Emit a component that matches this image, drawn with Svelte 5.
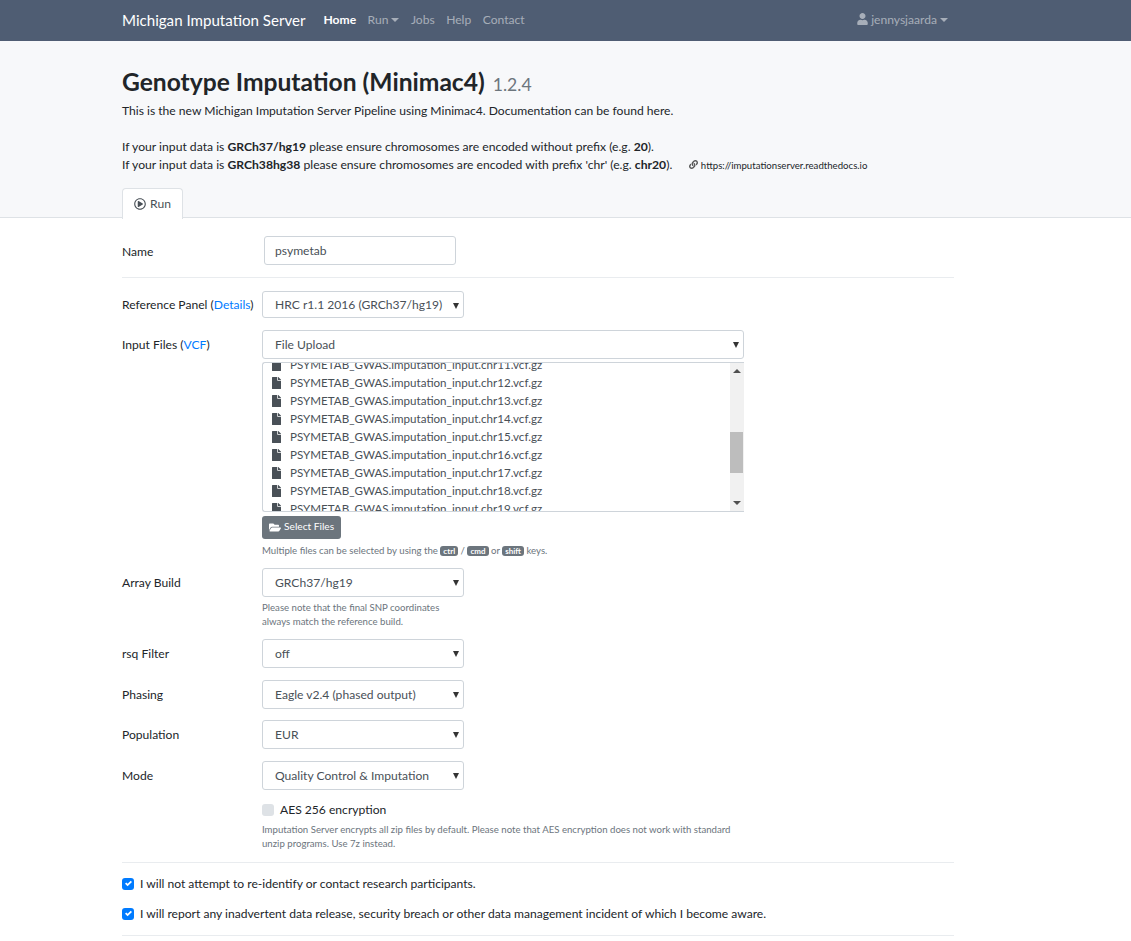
<script lang="ts">
	const files = [11, 12, 13, 14, 15, 16, 17, 18, 19];
	const selects = [
		{ label: 'rsq Filter', value: 'off' },
		{ label: 'Phasing', value: 'Eagle v2.4 (phased output)' },
		{ label: 'Population', value: 'EUR' },
		{ label: 'Mode', value: 'Quality Control & Imputation' }
	];
</script>

{#snippet caret()}
	<span class="caret" aria-hidden="true"></span>
{/snippet}

<div class="page">
	<nav class="navbar">
		<div class="nav-inner">
			<span class="brand">Michigan Imputation Server</span>
			<span class="nav-link active">Home</span>
			<span class="nav-link">Run<i class="nav-caret"></i></span>
			<span class="nav-link">Jobs</span>
			<span class="nav-link">Help</span>
			<span class="nav-link">Contact</span>
			<span class="nav-link user">
				<svg class="user-icon" viewBox="0 0 448 512" aria-hidden="true"><path fill="currentColor" d="M224 256c70.7 0 128-57.3 128-128S294.700 0 224 0 96 57.300 96 128s57.300 128 128 128zm89.600 32h-16.700c-22.200 10.200-46.900 16-72.900 16s-50.600-5.800-72.900-16h-16.700C60.200 288 0 348.200 0 422.400V464c0 26.500 21.500 48 48 48h352c26.500 0 48-21.500 48-48v-41.600c0-74.200-60.200-134.400-134.400-134.400z"/></svg>
				jennysjaarda<i class="nav-caret"></i>
			</span>
		</div>
	</nav>

	<header class="hero">
		<div class="container">
			<h1>Genotype Imputation (Minimac4) <small>1.2.4</small></h1>
			<p class="intro">This is the new Michigan Imputation Server Pipeline using Minimac4. Documentation can be found here.</p>
			<p class="intro note first-note">If your input data is <b>GRCh37/hg19</b> please ensure chromosomes are encoded without prefix (e.g. <b>20</b>).</p>
			<p class="intro note">
				If your input data is <b>GRCh38hg38</b> please ensure chromosomes are encoded with prefix 'chr' (e.g. <b>chr20</b>).
				<span class="doc-link">
					<svg class="link-icon" viewBox="0 0 512 512" aria-hidden="true"><path fill="currentColor" d="M326.612 185.391c59.747 59.809 58.927 155.698.36 214.590-.11.120-.24.250-.36.370l-67.200 67.200c-59.270 59.270-155.699 59.262-214.960 0-59.270-59.260-59.270-155.700 0-214.960l37.106-37.106c9.840-9.840 26.786-3.300 27.294 10.606.648 17.722 3.826 35.527 9.690 52.721 1.986 5.822.567 12.262-3.783 16.612l-13.087 13.087c-28.026 28.026-28.905 73.660-1.155 101.960 28.024 28.579 74.086 28.749 102.325.51l67.200-67.190c28.191-28.191 28.073-73.757 0-101.830-3.701-3.694-7.429-6.564-10.341-8.569a16.037 16.037 0 0 1-6.947-12.606c-.396-10.567 3.348-21.456 11.698-29.806l21.054-21.055c5.521-5.521 14.182-6.199 20.584-1.731a152.482 152.482 0 0 1 20.522 17.197zM467.547 44.449c-59.261-59.262-155.690-59.270-214.960 0l-67.200 67.200c-.12.120-.25.250-.36.370-58.566 58.892-59.387 154.781.36 214.590a152.454 152.454 0 0 0 20.521 17.196c6.402 4.468 15.064 3.789 20.584-1.731l21.054-21.055c8.350-8.350 12.094-19.239 11.698-29.806a16.037 16.037 0 0 0-6.947-12.606c-2.912-2.005-6.640-4.875-10.341-8.569-28.073-28.073-28.191-73.639 0-101.830l67.200-67.190c28.239-28.239 74.300-28.069 102.325.51 27.750 28.300 26.872 73.934-1.155 101.960l-13.087 13.087c-4.350 4.350-5.769 10.790-3.783 16.612 5.864 17.194 9.042 34.999 9.690 52.721.509 13.906 17.454 20.446 27.294 10.606l37.106-37.106c59.271-59.259 59.271-155.699.001-214.959z"/></svg>
					https://imputationserver.readthedocs.io
				</span>
			</p>
			<div class="tabs">
				<span class="tab">
					<svg class="play-icon" viewBox="0 0 512 512" aria-hidden="true"><path fill="currentColor" d="M371.700 238l-176-107c-15.800-8.800-35.700 2.500-35.700 21v208c0 18.400 19.800 29.800 35.700 21l176-101c16.400-9.100 16.400-32.800 0-42zM504 256C504 119 393 8 256 8S8 119 8 256s111 248 248 248 248-111 248-248zm-448 0c0-110.500 89.500-200 200-200s200 89.500 200 200-89.500 200-200 200S56 366.500 56 256z"/></svg>
					Run
				</span>
			</div>
		</div>
	</header>

	<main class="container form">
		<div class="row name-row">
			<span class="label">Name</span>
			<div class="input name-input">psymetab</div>
		</div>
		<hr class="name-rule" />

		<div class="row panel-row">
			<span class="label">Reference Panel (<a href="#details">Details</a>)</span>
			<div class="select">HRC r1.1 2016 (GRCh37/hg19){@render caret()}</div>
		</div>

		<div class="row files-row">
			<span class="label">Input Files (<a href="#vcf">VCF</a>)</span>
			<div class="control wide">
				<div class="select wide-select">File Upload{@render caret()}</div>
				<div class="file-box">
					<div class="file-clip">
						<ul>
							{#each files as chr}
								<li>
									<svg class="file-icon" viewBox="0 0 384 512" aria-hidden="true"><path fill="currentColor" d="M224 136V0H24C10.700 0 0 10.700 0 24v464c0 13.300 10.700 24 24 24h336c13.300 0 24-10.700 24-24V160H248c-13.200 0-24-10.800-24-24zm160-14.100V128H256V0h6.100c6.400 0 12.500 2.500 17 7l97.900 98c4.500 4.500 7 10.600 7 16.900z"/></svg>
									PSYMETAB_GWAS.imputation_input.chr{chr}.vcf.gz
								</li>
							{/each}
						</ul>
					</div>
					<div class="scrollbar" aria-hidden="true">
						<span class="arrow up"></span>
						<span class="thumb"></span>
						<span class="arrow down"></span>
					</div>
				</div>
				<div class="btn">
					<svg class="folder-icon" viewBox="0 0 576 512" aria-hidden="true"><path fill="currentColor" d="M572.694 292.093L500.270 416.248A63.997 63.997 0 0 1 444.989 448H45.025c-18.523 0-30.064-20.093-20.731-36.093l72.424-124.155A64 64 0 0 1 152 256h399.964c18.523 0 30.064 20.093 20.730 36.093zM152 224h328v-48c0-26.510-21.490-48-48-48H272l-64-64H48C21.490 64 0 85.490 0 112v278.046l69.077-118.418C86.214 242.250 117.989 224 152 224z"/></svg>
					<span class="btn-text">Select Files</span>
				</div>
				<p class="help keys">Multiple files can be selected by using the <kbd>ctrl</kbd> / <kbd>cmd</kbd> or <kbd>shift</kbd> keys.</p>
			</div>
		</div>

		<div class="row build-row">
			<span class="label">Array Build</span>
			<div class="control">
				<div class="select">GRCh37/hg19{@render caret()}</div>
				<p class="help build-help">Please note that the final SNP coordinates<br />always match the reference build.</p>
			</div>
		</div>

		{#each selects as item}
			<div class="row select-row">
				<span class="label">{item.label}</span>
				<div class="select">{item.value}{@render caret()}</div>
			</div>
		{/each}

		<div class="aes">
			<label class="check-line">
				<span class="box disabled"></span>
				AES 256 encryption
			</label>
			<p class="help">Imputation Server encrypts all zip files by default. Please note that AES encryption does not work with standard<br />unzip programs. Use 7z instead.</p>
		</div>
		<hr class="aes-rule" />

		<label class="check-line agree first">
			<span class="box checked"><svg viewBox="0 0 8 8" aria-hidden="true"><path fill="#fff" d="M6.564.75l-3.590 3.612-1.538-1.550L0 4.260l2.974 2.990L8 2.193z"/></svg></span>
			I will not attempt to re-identify or contact research participants.
		</label>
		<label class="check-line agree">
			<span class="box checked"><svg viewBox="0 0 8 8" aria-hidden="true"><path fill="#fff" d="M6.564.75l-3.590 3.612-1.538-1.550L0 4.260l2.974 2.990L8 2.193z"/></svg></span>
			I will report any inadvertent data release, security breach or other data management incident of which I become aware.
		</label>
		<hr class="end-rule" />
	</main>
</div>

<style>
	:global(body) {
		margin: 0;
		background: #fff;
	}

	.page {
		font-family: Lato, "Open Sans", sans-serif;
		font-size: 12.100px;
		line-height: 18px;
		color: #212529;
	}

	.navbar {
		height: 41px;
		background: #4f5d73;
	}

	.nav-inner {
		display: flex;
		align-items: center;
		height: 40px;
		width: 832px;
		margin-left: 122px;
	}

	.brand {
		font-size: 15.100px;
		color: #fff;
		margin-right: 18px;
	}

	.nav-link {
		color: rgba(255, 255, 255, 0.5);
		margin-right: 11.500px;
	}

	.nav-link.active {
		color: #fff;
		font-weight: 700;
	}

	.nav-link.user {
		margin-left: auto;
		margin-right: 6px;
	}

	.user-icon {
		width: 11px;
		height: 12px;
		vertical-align: -1px;
	}

	.nav-caret {
		display: inline-block;
		margin-left: 3px;
		vertical-align: 2px;
		border-top: 4px solid;
		border-left: 4px solid transparent;
		border-right: 4px solid transparent;
	}

	.hero {
		background: #f7f8fa;
		border-bottom: 1px solid #dee2e6;
		height: 176px;
	}

	.container {
		width: 832px;
		margin-left: 122px;
	}

	h1 {
		margin: 0;
		padding-top: 25px;
		font-size: 24.600px;
		font-weight: 700;
		line-height: 32px;
	}

	h1 small {
		font-size: 17.600px;
		font-weight: 400;
		color: #6c757d;
		margin-left: 2px;
	}

	.intro {
		margin: 0;
	}

	.intro:first-of-type {
		margin-top: 1px;
	}

	.note {
		font-size: 12.170px;
	}

	.first-note {
		margin-top: 18px;
	}

	.intro b {
		font-weight: 700;
	}

	.doc-link {
		font-size: 9.650px;
		margin-left: 14px;
	}

	.link-icon {
		width: 9px;
		height: 9px;
		color: #555;
	}

	.tabs {
		display: flex;
		margin-top: 14px;
	}

	.tab {
		display: flex;
		align-items: center;
		gap: 4px;
		box-sizing: border-box;
		width: 61px;
		height: 31px;
		justify-content: center;
		background: #fff;
		border: 1px solid #dee2e6;
		border-bottom: none;
		border-radius: 4px 4px 0 0;
		color: #495057;
	}

	.play-icon {
		width: 12px;
		height: 12px;
	}

	.form {
		padding-top: 18px;
	}

	.row {
		display: flex;
		align-items: flex-start;
	}

	.label {
		flex: 0 0 140px;
		line-height: 29px;
	}

	.name-row .label {
		padding-top: 1px;
	}

	.panel-row .label {
		line-height: 28px;
	}

	a {
		color: #007bff;
		text-decoration: none;
	}

	.input,
	.select {
		box-sizing: border-box;
		border: 1px solid #ced4da;
		border-radius: 3px;
		background: #fff;
		color: #495057;
		height: 29px;
		line-height: 27px;
		padding: 0 12px;
	}

	.name-input {
		width: 192px;
		margin-left: 2px;
		padding: 0 10px;
	}

	.select {
		position: relative;
		width: 202px;
	}

	.wide-select {
		width: 482px;
	}

	.caret {
		position: absolute;
		right: 4px;
		top: 11px;
		border-top: 6px solid #333;
		border-left: 3.500px solid transparent;
		border-right: 3.500px solid transparent;
	}

	hr {
		margin: 0;
		border: 0;
		border-top: 1px solid #e9ecef;
	}

	.name-rule {
		margin-top: 11px;
	}

	.panel-row {
		margin-top: 13px;
	}

	.panel-row .select {
		height: 27px;
		line-height: 25px;
	}

	.files-row {
		margin-top: 11px;
	}

	.control {
		display: flex;
		flex-direction: column;
		align-items: flex-start;
	}

	.wide {
		width: 482px;
	}

	.file-box {
		display: flex;
		box-sizing: border-box;
		width: 482px;
		height: 150px;
		margin-top: 3px;
		border: 1px solid #ced4da;
		border-right: none;
		border-top-left-radius: 3px;
		border-bottom-left-radius: 3px;
		background: #fff;
	}

	.file-clip {
		flex: 1;
		overflow: hidden;
	}

	ul {
		list-style: none;
		margin: -7px 0 0;
		padding: 0 0 0 9px;
	}

	li {
		display: flex;
		align-items: center;
		gap: 9px;
		height: 18px;
		font-size: 11.600px;
		color: #495057;
		white-space: nowrap;
	}

	.file-icon {
		width: 9px;
		height: 12px;
	}

	.scrollbar {
		position: relative;
		flex: 0 0 14px;
		background: #f1f1f1;
	}

	.thumb {
		position: absolute;
		left: 0;
		right: 1px;
		top: 69px;
		height: 41px;
		background: #bdbdbd;
	}

	.arrow {
		position: absolute;
		left: 3px;
		border-left: 4px solid transparent;
		border-right: 4px solid transparent;
	}

	.arrow.up {
		top: 6px;
		border-bottom: 4px solid #505050;
	}

	.arrow.down {
		bottom: 6px;
		border-top: 4px solid #505050;
	}

	.btn {
		display: flex;
		align-items: center;
		gap: 3px;
		box-sizing: border-box;
		height: 23px;
		margin-top: 4px;
		padding: 0 7px;
		border-radius: 3px;
		background: #6c757d;
		color: #fff;
		font-size: 10.200px;
	}

	.btn-text {
		line-height: 21px;
		margin-bottom: 2px;
	}

	.folder-icon {
		width: 12px;
		height: 11px;
	}

	.help {
		margin: 0;
		font-size: 9.650px;
		line-height: 14px;
		color: #6c757d;
	}

	.keys {
		margin-top: 4px;
	}

	kbd {
		display: inline-block;
		padding: 0 3px;
		border-radius: 3px;
		background: #6c757d;
		color: #fff;
		font-family: inherit;
		font-size: 8px;
		font-weight: 700;
		line-height: 10px;
	}

	.build-row {
		margin-top: 11px;
	}

	.build-help {
		margin-top: 3px;
	}

	.select-row {
		margin-top: 11.670px;
	}

	.build-row + .select-row {
		margin-top: 11px;
	}

	.aes {
		margin-left: 140px;
		margin-top: 11px;
		width: 482px;
	}

	.check-line {
		display: flex;
		align-items: center;
		gap: 6px;
	}

	.aes .help {
		margin-top: 3px;
		white-space: nowrap;
	}

	.box {
		flex: none;
		display: flex;
		align-items: center;
		justify-content: center;
		box-sizing: border-box;
		width: 12px;
		height: 12px;
		border-radius: 3px;
	}

	.box.disabled {
		background: #dee2e6;
	}

	.box.checked {
		background: #007bff;
	}

	.box svg {
		width: 7px;
		height: 7px;
	}

	.aes-rule {
		margin-top: 12px;
	}

	.agree {
		height: 18px;
	}

	.agree.first {
		margin: 12px 0 12px;
	}

	.end-rule {
		margin-top: 12px;
	}
</style>
